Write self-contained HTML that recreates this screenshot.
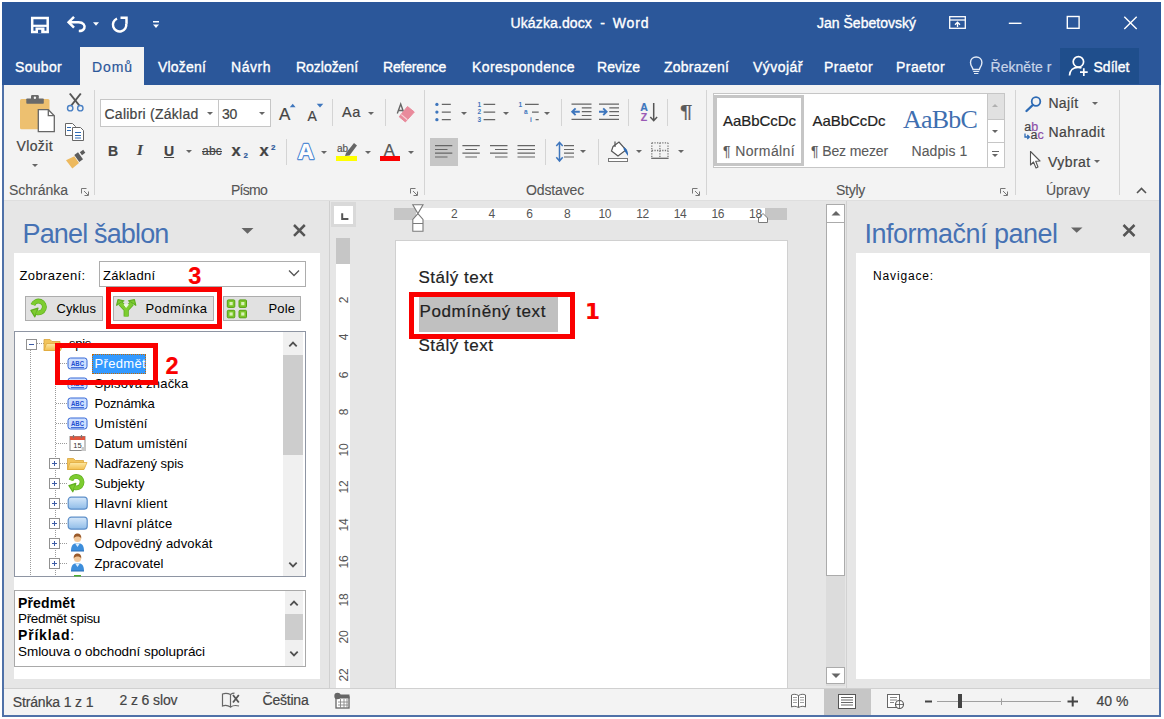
<!DOCTYPE html>
<html><head><meta charset="utf-8"><title>Ukázka.docx - Word</title>
<style>
html,body{margin:0;padding:0;background:#fff;}
body{width:1164px;height:719px;position:relative;overflow:hidden;font-family:"Liberation Sans",sans-serif;}
.a{position:absolute;}
.t{position:absolute;white-space:nowrap;font-family:"Liberation Sans",sans-serif;color:#444;-webkit-text-stroke:0.2px currentColor;}
.w{color:#fff;-webkit-text-stroke:0.35px #fff;}
.tah{color:#000;-webkit-text-stroke:0;}
.serif{font-family:"Liberation Serif",serif;}
.dj{font-family:"DejaVu Sans",sans-serif;}
svg{position:absolute;overflow:visible;}
.vsep{position:absolute;width:1px;background:#d4d4d4;}
.arr{position:absolute;width:0;height:0;border-left:3px solid transparent;border-right:3px solid transparent;border-top:3px solid #666;}
.btn{background:#e1e1e1;border:1px solid #adadad;box-sizing:border-box;}
.red{border:5px solid #fa0000;box-sizing:border-box;}
.exp{width:9px;height:9px;border:1px solid #919191;background:#fff;box-sizing:content-box;}
.exp i{position:absolute;left:2px;top:4px;width:5px;height:1px;background:#3c5ba5;}
.exp b{position:absolute;left:4px;top:2px;width:1px;height:5px;background:#3c5ba5;}
.rn{-webkit-text-stroke:0;color:#555;width:30px;height:12px;line-height:12px;font-size:12px;text-align:center;letter-spacing:-0.3px;}
</style></head><body>
<!-- window frame -->
<div class="a" id="win" style="left:2px;top:2px;width:1159px;height:714.5px;background:#4f71a8;"></div>
<div class="a" style="left:2px;top:2px;width:1159px;height:83px;background:#2b579a;"></div>
<div class="a" id="ribbon" style="left:4px;top:85px;width:1155px;height:115px;background:#f3f3f3;"></div>
<div class="a" id="ribbonline" style="left:4px;top:200px;width:1155px;height:1px;background:#dedede;"></div>
<div class="a" id="work" style="left:4px;top:201px;width:1155px;height:487px;background:#e6e6e6;"></div>
<div class="a" id="status" style="left:4px;top:688px;width:1155px;height:26.5px;background:#f3f3f3;border-top:1px solid #d0d0d0;box-sizing:border-box;"></div>

<!-- TITLEBAR -->
<div id="titlebar">
<div class="a" style="left:1060px;top:47.5px;width:79px;height:36px;background:#1f4e8c;"></div>
<div class="a" style="left:80px;top:47px;width:64px;height:39px;background:#f3f3f3;"></div>

<svg style="left:0;top:0" width="1164" height="90" viewBox="0 0 1164 90">
<!-- save -->
<path d="M32.200 18 H47.700 V32 H32.200 Z" fill="none" stroke="#fff" stroke-width="2.500"></path>
<path d="M32 25.800 H48" stroke="#fff" stroke-width="2.200"></path>
<rect x="35.500" y="27.500" width="9" height="5" fill="#fff"></rect><rect x="38" y="29.800" width="3.200" height="3.400" fill="#2b579a"></rect>
<!-- undo -->
<path d="M69 22.200 H78.500 C83.500 22.200 85.300 25.500 84.300 28.200 C83.500 30.300 81.500 31 78.800 31" fill="none" stroke="#fff" stroke-width="2.500"></path>
<path d="M74 16.800 L68.600 22.200 L74 27.600" fill="none" stroke="#fff" stroke-width="2.500"></path>
<path d="M93 22.300 H99 L96 25.800 Z" fill="#fff"></path>
<!-- redo -->
<path d="M117 18.600 A6.700 6.700 0 1 0 126.200 23.500" fill="none" stroke="#fff" stroke-width="2.500"></path>
<path d="M120.500 17.700 H126.500 V23.700" fill="none" stroke="#fff" stroke-width="2.500"></path>
<!-- customize -->
<rect x="153" y="21" width="6" height="1.500" fill="#fff"></rect>
<path d="M153 24.500 H159 L156 28 Z" fill="#fff"></path>
<!-- ribbon display options -->
<rect x="949.700" y="16.700" width="15.600" height="11.600" fill="none" stroke="#fff" stroke-width="1.300"></rect>
<path d="M949.700 20 H965.300" stroke="#fff" stroke-width="1.300"></path>
<path d="M957.500 27 V22.300 M955 24.700 L957.500 22.200 L960 24.700" fill="none" stroke="#fff" stroke-width="1.300"></path>
<!-- min max close -->
<path d="M1008.800 23.300 H1021.500" stroke="#fff" stroke-width="1.400"></path>
<rect x="1067.300" y="16.500" width="11.800" height="11.800" fill="none" stroke="#fff" stroke-width="1.400"></rect>
<path d="M1124.300 16.700 L1136.700 29 M1136.700 16.700 L1124.300 29" stroke="#fff" stroke-width="1.400"></path>
<!-- bulb -->
<path d="M973 69.500 C972.800 67.500 970.500 66.200 970.500 62.500 C970.500 59.300 973 57 976.200 57 C979.400 57 981.900 59.300 981.900 62.500 C981.900 66.200 979.600 67.500 979.400 69.500 Z" fill="none" stroke="#e4ebf6" stroke-width="1.400"></path>
<path d="M973.200 71.500 H979.200 M974 73.500 H978.400" stroke="#e4ebf6" stroke-width="1.200"></path>
<!-- share person -->
<circle cx="1078.400" cy="61.800" r="5.200" fill="none" stroke="#fff" stroke-width="1.700"></circle>
<path d="M1069.500 75.500 C1069.800 70 1073.500 67.300 1078 67.300 C1079.500 67.300 1080.500 67.500 1081.500 68" fill="none" stroke="#fff" stroke-width="1.700"></path>
<path d="M1083.800 68.300 V76 M1080 72.200 H1087.700" stroke="#fff" stroke-width="1.700"></path>
</svg>
<span class="t w" style="left: 510.5px; font-size: 14px; line-height: 14px; top: 15.95px; letter-spacing: 0.122px;">Ukázka.docx</span>
<span class="t w" style="left: 600.3px; font-size: 14px; line-height: 14px; top: 15.95px;">-</span>
<span class="t w" style="left: 612.8px; font-size: 14px; line-height: 14px; top: 15.95px; letter-spacing: 0.824px;">Word</span>
<span class="t w" style="left: 817px; font-size: 14px; line-height: 14px; top: 15.95px; letter-spacing: 0.011px;">Jan Šebetovský</span>
</div>

<!-- TABS -->
<div id="tabs">
<span class="t w" style="left: 15px; font-size: 14px; line-height: 14px; top: 60.15px; letter-spacing: 0.307px;">Soubor</span>
<span class="t" style="color: rgb(43, 87, 154); left: 92px; font-size: 14px; line-height: 14px; top: 60.15px; letter-spacing: 0.91px;">Domů</span>
<span class="t w" style="left: 158px; font-size: 14px; line-height: 14px; top: 60.15px; letter-spacing: 0.185px;">Vložení</span>
<span class="t w" style="left: 231px; font-size: 14px; line-height: 14px; top: 60.15px; letter-spacing: 0.528px;">Návrh</span>
<span class="t w" style="left: 296px; font-size: 14px; line-height: 14px; top: 60.15px; letter-spacing: -0.03px;">Rozložení</span>
<span class="t w" style="left: 383px; font-size: 14px; line-height: 14px; top: 60.15px; letter-spacing: -0.177px;">Reference</span>
<span class="t w" style="left: 472px; font-size: 14px; line-height: 14px; top: 60.15px; letter-spacing: 0.379px;">Korespondence</span>
<span class="t w" style="left: 597px; font-size: 14px; line-height: 14px; top: 60.15px; letter-spacing: 0.034px;">Revize</span>
<span class="t w" style="left: 664px; font-size: 14px; line-height: 14px; top: 60.15px; letter-spacing: 0.217px;">Zobrazení</span>
<span class="t w" style="left: 753px; font-size: 14px; line-height: 14px; top: 60.15px; letter-spacing: 0.473px;">Vývojář</span>
<span class="t w" style="left: 824px; font-size: 14px; line-height: 14px; top: 60.15px; letter-spacing: 0.44px;">Praetor</span>
<span class="t w" style="left: 896px; font-size: 14px; line-height: 14px; top: 60.15px; letter-spacing: 0.44px;">Praetor</span>
<span class="t" style="color: rgb(200, 212, 232); left: 990.5px; font-size: 14px; line-height: 14px; top: 60.15px; letter-spacing: 0.033px;">Řekněte r</span>
<span class="t w" style="left: 1093.5px; font-size: 14px; line-height: 14px; top: 60.15px; letter-spacing: 0.031px;">Sdílet</span>
</div>

<!-- RIBBON -->
<div id="rib">

<!-- group separators -->
<div class="vsep" style="left:94px;top:90px;height:105px;"></div>
<div class="vsep" style="left:424px;top:90px;height:105px;"></div>
<div class="vsep" style="left:706px;top:90px;height:105px;"></div>
<div class="vsep" style="left:1015px;top:90px;height:105px;"></div>
<div class="vsep" style="left:1119px;top:90px;height:105px;"></div>
<!-- small separators -->
<div class="vsep" style="left:332px;top:99px;height:27px;"></div>
<div class="vsep" style="left:385px;top:99px;height:27px;"></div>
<div class="vsep" style="left:286px;top:139px;height:26px;"></div>
<div class="vsep" style="left:561px;top:99px;height:27px;"></div>
<div class="vsep" style="left:628px;top:99px;height:27px;"></div>
<div class="vsep" style="left:667px;top:99px;height:27px;"></div>
<div class="vsep" style="left:545px;top:139px;height:26px;"></div>
<div class="vsep" style="left:598px;top:139px;height:26px;"></div>
<!-- group labels -->
<span class="t" style="color: rgb(85, 85, 85); -webkit-text-stroke: 0.1px; left: 9px; font-size: 14px; line-height: 14px; top: 182.65px; letter-spacing: -0.02px;">Schránka</span>
<span class="t" style="color: rgb(85, 85, 85); -webkit-text-stroke: 0.1px; left: 231px; font-size: 14px; line-height: 14px; top: 182.65px; letter-spacing: -0.737px;">Písmo</span>
<span class="t" style="color: rgb(85, 85, 85); -webkit-text-stroke: 0.1px; left: 526px; font-size: 14px; line-height: 14px; top: 182.65px; letter-spacing: -0.143px;">Odstavec</span>
<span class="t" style="color: rgb(85, 85, 85); -webkit-text-stroke: 0.1px; left: 836px; font-size: 14px; line-height: 14px; top: 182.65px; letter-spacing: -0.269px;">Styly</span>
<span class="t" style="color: rgb(85, 85, 85); -webkit-text-stroke: 0.1px; left: 1046px; font-size: 14px; line-height: 14px; top: 182.65px; letter-spacing: -0.06px;">Úpravy</span>
<!-- clipboard -->
<span class="t" style="left: 16.5px; font-size: 14px; line-height: 14px; top: 139.15px; letter-spacing: 0.378px;">Vložit</span>
<div class="arr" style="left:32px;top:164px;"></div>
<!-- font boxes -->
<div class="a" style="left:100px;top:99px;width:171px;height:28px;background:#fff;border:1px solid #c6c6c6;box-sizing:border-box;"></div>
<div class="a" style="left:218px;top:99px;width:1px;height:28px;background:#c6c6c6;"></div>
<span class="t" style="left: 104.5px; font-size: 14px; line-height: 14px; top: 106.65px; letter-spacing: 0.25px;">Calibri (Základ</span>
<div class="arr" style="left:207px;top:112px;"></div>
<span class="t" style="left: 222px; font-size: 14px; line-height: 14px; top: 106.65px; letter-spacing: -0.289px;">30</span>
<div class="arr" style="left:259px;top:112px;"></div>
<span class="t" style="left: 279px; font-size: 17px; line-height: 17px; top: 106.11px;">A</span>
<span class="t" style="left: 307.5px; font-size: 14px; line-height: 14px; top: 108.65px;">A</span>
<span class="t" style="left: 342px; font-size: 14.5px; line-height: 14.5px; top: 104.73px; letter-spacing: 0.625px;">Aa</span>
<div class="arr" style="left:368px;top:112px;"></div>
<!-- row 2 font -->
<span class="t" style="font-weight: bold; left: 108px; font-size: 14px; line-height: 14px; top: 144.15px;">B</span>
<span class="t serif" style="font-style: italic; font-weight: bold; left: 137px; font-size: 15px; line-height: 15px; top: 143.44px;">I</span>
<span class="t" style="font-weight: bold; text-decoration: underline; left: 164px; font-size: 14px; line-height: 14px; top: 144.15px;">U</span>
<div class="arr" style="left:186px;top:150px;"></div>
<span class="t" style="text-decoration: line-through; left: 202px; font-size: 12px; line-height: 12px; top: 145.34px; letter-spacing: 0.214px;">abc</span>
<span class="t" style="font-weight: bold; left: 231.5px; font-size: 16.5px; line-height: 16.5px; top: 142.03px;">x</span>
<span class="t" style="font-weight: bold; color: rgb(43, 87, 154); left: 243.5px; font-size: 8px; line-height: 8px; top: 152.23px;">2</span>
<span class="t" style="font-weight: bold; left: 259.5px; font-size: 16.5px; line-height: 16.5px; top: 142.03px;">x</span>
<span class="t" style="font-weight: bold; color: rgb(43, 87, 154); left: 271px; font-size: 8px; line-height: 8px; top: 143.73px;">2</span>
<div class="arr" style="left:321px;top:150.500px;"></div>
<div class="arr" style="left:364.700px;top:150.500px;"></div>
<div class="arr" style="left:407.500px;top:150.500px;"></div>
<span class="t" style="color: rgb(85, 85, 85); left: 383.8px; font-size: 16.5px; line-height: 16.5px; top: 142.03px;">A</span>
<div class="a" style="left:380px;top:156px;width:20px;height:5px;background:#fa0000;"></div>
<span class="t" style="color: rgb(85, 85, 85); left: 337px; font-size: 10px; line-height: 10px; top: 143.54px; letter-spacing: -0.062px;">ab</span>
<div class="a" style="left:336px;top:156px;width:21px;height:5px;background:#ffff00;"></div>
<!-- paragraph row1 arrows -->
<div class="arr" style="left:461px;top:112px;"></div>
<div class="arr" style="left:503px;top:112px;"></div>
<div class="arr" style="left:544px;top:112px;"></div>
<div class="arr" style="left:580px;top:150px;"></div>
<div class="arr" style="left:636px;top:150px;"></div>
<div class="arr" style="left:678px;top:150px;"></div>
<div class="a" style="left:430px;top:138px;width:28px;height:28px;background:#c6c6c6;"></div>
<span class="t" style="color: rgb(90, 90, 90); transform: scaleX(1.3); transform-origin: 0px 0px; left: 680px; font-size: 18px; line-height: 18px; top: 102.96px;">¶</span>
<!-- styles gallery -->
<div class="a" style="left:713px;top:93px;width:292px;height:75px;background:#fff;border:1px solid #c6c6c6;box-sizing:border-box;"></div>
<div class="a" style="left:714px;top:95px;width:90px;height:71px;border:3px solid #c6c6c6;box-sizing:border-box;"></div>
<span class="t" style="color: rgb(34, 34, 34); left: 723px; font-size: 15px; line-height: 15px; top: 113.3px; letter-spacing: -0.045px;">AaBbCcDc</span>
<span class="t" style="color: rgb(90, 90, 90); -webkit-text-stroke: 0.1px; left: 723px; font-size: 14px; line-height: 14px; top: 144.15px; letter-spacing: 0.38px;">¶ Normální</span>
<span class="t" style="color: rgb(34, 34, 34); left: 812.5px; font-size: 15px; line-height: 15px; top: 113.3px; letter-spacing: -0.045px;">AaBbCcDc</span>
<span class="t" style="color: rgb(90, 90, 90); -webkit-text-stroke: 0.1px; left: 811px; font-size: 14px; line-height: 14px; top: 144.15px; letter-spacing: -0.121px;">¶ Bez mezer</span>
<span class="t serif" style="color: rgb(63, 111, 176); -webkit-text-stroke: 0px; left: 903px; font-size: 26px; line-height: 26px; top: 106.73px; letter-spacing: -0.8px;">AaBbC</span>
<span class="t" style="color: rgb(90, 90, 90); -webkit-text-stroke: 0.1px; left: 911.5px; font-size: 14px; line-height: 14px; top: 144.15px; letter-spacing: 0.092px;">Nadpis 1</span>
<div class="a" style="left:987px;top:94px;width:17px;height:25px;background:#e1e1e1;border-left:1px solid #c6c6c6;box-sizing:border-box;"></div>
<div class="a" style="left:987px;top:119px;width:17px;height:24px;border:1px solid #c6c6c6;border-right:none;box-sizing:border-box;"></div>
<div class="a" style="left:987px;top:143px;width:17px;height:24px;border-left:1px solid #c6c6c6;box-sizing:border-box;"></div>
<div class="arr" style="left:992px;top:104px;border-top:none;border-bottom:3px solid #b0b0b0;"></div>
<div class="arr" style="left:992px;top:130px;"></div>
<div class="a" style="left:992px;top:151px;width:7px;height:1px;background:#666;"></div>
<div class="arr" style="left:992px;top:154px;"></div>
<!-- editing -->
<span class="t" style="left: 1048.5px; font-size: 14px; line-height: 14px; top: 96.15px; letter-spacing: 0.241px;">Najít</span>
<div class="arr" style="left:1092px;top:102px;"></div>
<span class="t" style="left: 1048.5px; font-size: 14px; line-height: 14px; top: 125.15px; letter-spacing: 0.447px;">Nahradit</span>
<span class="t" style="left: 1048px; font-size: 14px; line-height: 14px; top: 154.65px; letter-spacing: 0.424px;">Vybrat</span>
<div class="arr" style="left:1094px;top:160px;"></div>
<span class="t" style="color: rgb(68, 68, 68); left: 1024.3px; font-size: 12.5px; line-height: 12.5px; top: 121.22px;">a<span style="color:#8d4fa8">b</span></span>
<span class="t" style="color: rgb(68, 68, 68); left: 1030.5px; font-size: 12.5px; line-height: 12.5px; top: 129.22px;">a<span style="color:#8d4fa8">c</span></span>

<svg id="ribsvg" style="left:0;top:0" width="1164" height="719" viewBox="0 0 1164 719">
<!-- paste -->
<rect x="20" y="99" width="29.500" height="30.300" rx="1.500" fill="#edc070"></rect>
<rect x="26.300" y="98.400" width="17.500" height="5.400" rx="0.800" fill="#6a6a6a"></rect>
<rect x="31" y="95" width="7.800" height="4.500" rx="1.200" fill="#6a6a6a"></rect>
<circle cx="34.900" cy="97.700" r="1.200" fill="#f3f3f3"></circle>
<path d="M38.300 109.700 H48.300 L54.300 115.700 V131.700 H38.300 Z" fill="#fff" stroke="#666" stroke-width="1.300"></path>
<path d="M48.300 109.700 V115.700 H54.300" fill="none" stroke="#666" stroke-width="1.300"></path>
<!-- scissors -->
<g stroke="#555" stroke-width="2" fill="none"><path d="M69.800 93.500 L79.300 105.500"></path><path d="M80.800 93.500 L71.300 105.500"></path></g>
<circle cx="70.200" cy="108.200" r="2.700" fill="none" stroke="#4a80c4" stroke-width="1.400"></circle>
<circle cx="80.300" cy="108.200" r="2.700" fill="none" stroke="#4a80c4" stroke-width="1.400"></circle>
<!-- copy -->
<g fill="#fff" stroke="#666" stroke-width="1"><path d="M65.500 123.500 H72.500 L75.500 126.500 V135.500 H65.500 Z"></path><path d="M72.500 127.500 H80.500 L83.500 130.500 V140.500 H72.500 Z"></path></g>
<g stroke="#2e6bb5" stroke-width="1"><path d="M67 127.500 H71 M67 130.500 H71 M75 132.500 H81 M75 135.500 H81 M75 138 H81"></path></g>
<!-- format painter -->
<path d="M66 160.300 L74.300 156.300 L79 163 L72.300 168.500 Z" fill="#edb95e"></path>
<path d="M74.300 155 L78 152.300 L83 159.300 L79.300 162 Z" fill="#5c5c5c"></path>
<path d="M79.800 152.300 L83.200 149.800 L85.300 152.800 L82 155.300 Z" fill="#5c5c5c"></path>
<!-- launchers -->
<defs><g id="lnch" fill="none" stroke="#777" stroke-width="1"><path d="M0.500 5.500 V0.500 H5.500"></path><path d="M3 3 L7 7 M7.500 3.500 V7.500 H3.500"></path></g></defs>
<!-- grow/shrink font triangles -->
<path d="M289.800 107.300 L292.700 103.800 L295.600 107.300 Z" fill="#3e76bd"></path>
<path d="M316.700 103.700 L323.300 103.700 L320 107.400 Z" fill="#3e76bd"></path>
<!-- clear formatting -->
<path d="M397.300 113.600 L400.700 104 L404.100 113.600 M398.500 110.500 H403" fill="none" stroke="#666" stroke-width="1.400"></path>
<path d="M407.500 106.500 L414.300 112 L405.400 121.900 L399.200 116.800 Z" fill="#e98a9b" stroke="#e98a9b" stroke-width="1" stroke-linejoin="round"></path>
<path d="M401.300 114.600 L407.300 119.700" stroke="#f7d0d6" stroke-width="1.200"></path>
<!-- text effects A -->
<text x="297.800" y="158.600" font-family="Liberation Sans, sans-serif" font-size="22.500" font-weight="bold" fill="#fdfdfd" stroke="#4a86d3" stroke-width="2.600" stroke-linejoin="round" paint-order="stroke" opacity="0.95">A</text>
<text x="297.800" y="158.600" font-family="Liberation Sans, sans-serif" font-size="22.500" font-weight="bold" fill="#fdfdfd">A</text>
<!-- highlighter pen -->
<path d="M346 153 L354 143 L357 145.500 L349.500 155.500 L345 156 Z" fill="#666"></path>
<!-- bullets -->
<g fill="#3e76bd"><circle cx="436.900" cy="104.400" r="1.650"></circle><circle cx="436.900" cy="112.100" r="1.650"></circle><circle cx="436.900" cy="119.700" r="1.650"></circle></g>
<g stroke="#666" stroke-width="1.300"><path d="M441.800 104.400 H450.800 M441.800 112.100 H450.800 M441.800 119.700 H450.800"></path></g>
<!-- numbering -->
<text x="479.200" y="106.700" font-family="Liberation Sans, sans-serif" font-size="6.500" font-weight="bold" fill="#3e76bd" text-anchor="middle">1</text><text x="479.200" y="114.400" font-family="Liberation Sans, sans-serif" font-size="6.500" font-weight="bold" fill="#3e76bd" text-anchor="middle">2</text><text x="479.200" y="122" font-family="Liberation Sans, sans-serif" font-size="6.500" font-weight="bold" fill="#3e76bd" text-anchor="middle">3</text>
<g stroke="#666" stroke-width="1.300"><path d="M483.600 104.400 H495.200 M483.600 112.100 H495.200 M483.600 119.700 H495.200"></path></g>
<!-- multilevel -->
<text x="520.400" y="106.700" font-family="Liberation Sans, sans-serif" font-size="6.500" font-weight="bold" fill="#3e76bd" text-anchor="middle">1</text><text x="525.700" y="114.200" font-family="Liberation Sans, sans-serif" font-size="6.500" font-weight="bold" fill="#3e76bd" text-anchor="middle">a</text><text x="531" y="122" font-family="Liberation Sans, sans-serif" font-size="6.500" font-weight="bold" fill="#3e76bd" text-anchor="middle">i</text>
<g stroke="#666" stroke-width="1.300"><path d="M525 104.400 H538.700 M532 112.100 H538.700 M535.600 119.700 H538.700"></path></g>
<!-- outdent -->
<g stroke="#666" stroke-width="1.200"><path d="M571.500 104.200 H591.500 M581.800 107.900 H591.500 M581.800 111.700 H591.500 M581.800 115.500 H591.500 M571.500 119.300 H591.500"></path></g>
<path d="M572.500 111.700 H579.800 M575.600 108.300 L572.200 111.700 L575.600 115.100" fill="none" stroke="#3e76bd" stroke-width="1.900"></path>
<!-- indent -->
<g stroke="#666" stroke-width="1.200"><path d="M599 104.200 H619 M609.300 107.900 H619 M609.300 111.700 H619 M609.300 115.500 H619 M599 119.300 H619"></path></g>
<path d="M599 111.700 H606.500 M603.200 108.300 L606.600 111.700 L603.200 115.100" fill="none" stroke="#3e76bd" stroke-width="1.900"></path>
<!-- sort -->
<path d="M653.700 103 V120.500 M650.300 117 L653.700 120.700 L657.100 117" fill="none" stroke="#555" stroke-width="1.500"></path>
<!-- align icons -->
<g stroke="#666" stroke-width="1.2">
<path d="M435 145.700 H452.300 M435 149.500 H447.500 M435 153.200 H452.300 M435 157 H447.500"></path>
<path d="M462.400 145.700 H479.800 M465.300 149.500 H477 M462.400 153.200 H479.800 M465.300 157 H477"></path>
<path d="M490 145.700 H507.500 M495 149.500 H507.500 M490 153.200 H507.500 M495 157 H507.500"></path>
<path d="M517.500 145.700 H535 M517.500 149.500 H535 M517.500 153.200 H535 M517.500 157 H535"></path>
</g>
<!-- line spacing -->
<g stroke="#666" stroke-width="1.200"><path d="M564 145.700 H574 M564 149.500 H574 M564 153.200 H574 M564 157 H574"></path></g>
<path d="M559.500 142.500 V160.500 M556.300 146 L559.500 142.300 L562.700 146 M556.300 157.300 L559.500 161 L562.700 157.300" fill="none" stroke="#3e76bd" stroke-width="1.500"></path>
<!-- shading bucket -->
<path d="M613 146.500 L619 142 L626 150 L618 156 L611.500 151 Z" fill="#fff" stroke="#555" stroke-width="1.2"></path>
<path d="M615 141.500 V147" stroke="#555" stroke-width="1.2"></path>
<path d="M624 147 C627 149 628.500 152 628 156 C626 153 624.500 151 623.500 149 Z" fill="#2e6bb5"></path>
<rect x="608.500" y="158.500" width="19" height="3" fill="#fff" stroke="#777" stroke-width="1"></rect>
<!-- borders -->
<g stroke="#7a7a7a" stroke-width="1.300" stroke-dasharray="1.300 1.300" fill="none"><path d="M651.800 142.800 H668 M651.800 142.800 V158 M668 142.800 V158 M659.900 142.800 V158 M651.800 150.500 H668"></path></g>
<path d="M651.200 158.300 H668.600" stroke="#666" stroke-width="1.300"></path>
<!-- magnifier -->
<circle cx="1036" cy="101.500" r="4.300" fill="none" stroke="#2e6bb5" stroke-width="1.8"></circle>
<path d="M1032.800 105 L1026.500 111" stroke="#2e6bb5" stroke-width="2.4" stroke-linecap="round"></path>
<!-- replace arrow -->
<path d="M1025 133.500 V137 H1029 M1027.300 135 L1029.300 137 L1027.300 139" fill="none" stroke="#2e6bb5" stroke-width="1.3"></path>
<!-- select cursor -->
<path d="M1030.500 151.500 V165 L1033.500 162 L1036 168 L1038 167 L1035.700 161.300 L1040 161 Z" fill="#fff" stroke="#555" stroke-width="1.1" stroke-linejoin="round"></path>
<!-- collapse chevron -->
<path d="M1137 193 L1141.500 188.500 L1146 193" fill="none" stroke="#555" stroke-width="1.6"></path>
</svg>
<svg style="left:81px;top:187.500px" width="9" height="9"><use href="#lnch"></use></svg>
<svg style="left:410px;top:187.500px" width="9" height="9"><use href="#lnch"></use></svg>
<svg style="left:692px;top:187.500px" width="9" height="9"><use href="#lnch"></use></svg>
<svg style="left:1000px;top:187.500px" width="9" height="9"><use href="#lnch"></use></svg>
<span class="t" style="color: rgb(62, 118, 189); font-weight: bold; left: 640.3px; font-size: 10.5px; line-height: 10.5px; top: 101.91px;">A</span>
<span class="t" style="color: rgb(154, 89, 181); font-weight: bold; left: 640.8px; font-size: 10.5px; line-height: 10.5px; top: 112.11px;">Z</span>
</div>

<!-- LEFT PANEL -->
<div id="left">

<div class="a" style="left:14px;top:253px;width:306px;height:426px;background:#fff;"></div>
<span class="t" style="color: rgb(70, 114, 180); -webkit-text-stroke: 0px; left: 22.5px; font-size: 27px; line-height: 27px; top: 221.14px; letter-spacing: -0.844px;">Panel šablon</span>
<svg style="left:0;top:200px" width="330" height="60" viewBox="0 200 330 60">
<path d="M241.500 228 H253.500 L247.500 233.800 Z" fill="#666"></path>
<path d="M294 225 L304.800 235.800 M304.800 225 L294 235.800" stroke="#555" stroke-width="2.500"></path>
</svg>
<span class="t tah" style="left: 19.5px; font-size: 13px; line-height: 13px; top: 268.8px; letter-spacing: 0.384px;">Zobrazení:</span>
<div class="a" style="left:99px;top:261px;width:206.500px;height:25.500px;background:#fff;border:1px solid #adadad;box-sizing:border-box;"></div>
<span class="t tah" style="left: 103px; font-size: 13px; line-height: 13px; top: 268.8px; letter-spacing: 0.328px;">Základní</span>
<svg style="left:288px;top:269px" width="12" height="8"><path d="M1 1.500 L6 6.500 L11 1.500" fill="none" stroke="#555" stroke-width="1.300"></path></svg>
<!-- buttons -->
<div class="a btn" style="left:25px;top:295.800px;width:77.500px;height:25.500px;"></div>
<div class="a btn" style="left:113.300px;top:295.800px;width:100.500px;height:25.500px;"></div>
<div class="a btn" style="left:223px;top:295.800px;width:77.500px;height:25.500px;"></div>
<span class="t tah" style="left: 56.5px; font-size: 13px; line-height: 13px; top: 302.3px; letter-spacing: 0.081px;">Cyklus</span>
<span class="t tah" style="left: 145.5px; font-size: 13px; line-height: 13px; top: 302.3px; letter-spacing: 0.432px;">Podmínka</span>
<span class="t tah" style="left: 268.5px; font-size: 13px; line-height: 13px; top: 302.3px; letter-spacing: 0.117px;">Pole</span>
<!-- tree box -->
<div class="a" style="left:14px;top:331px;width:292px;height:246px;background:#fff;border:1px solid #8e95a3;box-sizing:border-box;"></div>
<div class="a" style="left:283px;top:332px;width:20px;height:244px;background:#f0f0f0;"></div>
<div class="a" style="left:283px;top:355px;width:20px;height:100px;background:#cdcdcd;"></div>
<svg style="left:287px;top:340px" width="12" height="8"><path d="M2.300 6.300 L6 2.600 L9.700 6.300" fill="none" stroke="#505050" stroke-width="1.800"></path></svg>
<svg style="left:287px;top:561px" width="12" height="8"><path d="M2.300 1.700 L6 5.400 L9.700 1.700" fill="none" stroke="#505050" stroke-width="1.800"></path></svg>
<!-- tree lines -->
<div class="a" style="left:30px;top:349px;width:0;height:226px;border-left:1px dotted #9a9a9a;"></div>
<div class="a" style="left:55px;top:352px;width:0;height:223px;border-left:1px dotted #9a9a9a;"></div>
<div class="a" style="left:36px;top:343px;width:8px;height:0;border-top:1px dotted #9a9a9a;"></div>
<span class="t tah" style="left: 69px; font-size: 13px; line-height: 13px; top: 336.5px; letter-spacing: -0.281px;">spis</span>
<div class="a" style="left:92px;top:354px;width:54px;height:20px;background:#3399ff;outline:1px dotted #c66a00;outline-offset:-1px;"></div>
<span class="t tah" style="color: rgb(255, 255, 255); left: 94.5px; font-size: 13px; line-height: 13px; top: 356.6px; letter-spacing: 0.337px;">Předmět</span>
<div class="a" style="left:56px;top:363px;width:11px;height:0;border-top:1px dotted #9a9a9a;"></div>
<span class="t tah" style="left: 94.5px; font-size: 13px; line-height: 13px; top: 376.6px; letter-spacing: 0.21px;">Spisová značka</span>
<div class="a" style="left:56px;top:383px;width:11px;height:0;border-top:1px dotted #9a9a9a;"></div>
<span class="t tah" style="left: 94.5px; font-size: 13px; line-height: 13px; top: 396.6px; letter-spacing: -0.178px;">Poznámka</span>
<div class="a" style="left:56px;top:403px;width:11px;height:0;border-top:1px dotted #9a9a9a;"></div>
<span class="t tah" style="left: 94.5px; font-size: 13px; line-height: 13px; top: 416.6px; letter-spacing: 0.123px;">Umístění</span>
<div class="a" style="left:56px;top:423px;width:11px;height:0;border-top:1px dotted #9a9a9a;"></div>
<span class="t tah" style="left: 94.5px; font-size: 13px; line-height: 13px; top: 436.6px; letter-spacing: 0.088px;">Datum umístění</span>
<div class="a" style="left:56px;top:443px;width:11px;height:0;border-top:1px dotted #9a9a9a;"></div>
<span class="t tah" style="left: 94.5px; font-size: 13px; line-height: 13px; top: 456.6px; letter-spacing: -0.044px;">Nadřazený spis</span>
<div class="a" style="left:59px;top:463px;width:8px;height:0;border-top:1px dotted #9a9a9a;"></div>
<div class="a exp" style="left:49px;top:458px;"><i></i><b></b></div>
<span class="t tah" style="left: 94.5px; font-size: 13px; line-height: 13px; top: 476.6px; letter-spacing: 0.016px;">Subjekty</span>
<div class="a" style="left:59px;top:483px;width:8px;height:0;border-top:1px dotted #9a9a9a;"></div>
<div class="a exp" style="left:49px;top:478px;"><i></i><b></b></div>
<span class="t tah" style="left: 94.5px; font-size: 13px; line-height: 13px; top: 496.6px; letter-spacing: 0.168px;">Hlavní klient</span>
<div class="a" style="left:59px;top:503px;width:8px;height:0;border-top:1px dotted #9a9a9a;"></div>
<div class="a exp" style="left:49px;top:498px;"><i></i><b></b></div>
<span class="t tah" style="left: 94.5px; font-size: 13px; line-height: 13px; top: 516.6px; letter-spacing: 0.219px;">Hlavní plátce</span>
<div class="a" style="left:59px;top:523px;width:8px;height:0;border-top:1px dotted #9a9a9a;"></div>
<div class="a exp" style="left:49px;top:518px;"><i></i><b></b></div>
<span class="t tah" style="left: 94.5px; font-size: 13px; line-height: 13px; top: 536.6px; letter-spacing: 0.139px;">Odpovědný advokát</span>
<div class="a" style="left:59px;top:543px;width:8px;height:0;border-top:1px dotted #9a9a9a;"></div>
<div class="a exp" style="left:49px;top:538px;"><i></i><b></b></div>
<span class="t tah" style="left: 94.5px; font-size: 13px; line-height: 13px; top: 556.6px; letter-spacing: 0.098px;">Zpracovatel</span>
<div class="a" style="left:59px;top:563px;width:8px;height:0;border-top:1px dotted #9a9a9a;"></div>
<div class="a exp" style="left:49px;top:558px;"><i></i><b></b></div>
<div class="a exp" style="left:26px;top:339px;"><i></i></div>
<svg style="left:0;top:330px" width="330" height="250" viewBox="0 330 330 250">
<defs>
<linearGradient id="gblue" x1="0" y1="0" x2="0" y2="1"><stop offset="0" stop-color="#d6e8fa"></stop><stop offset="1" stop-color="#8fbce8"></stop></linearGradient>
<linearGradient id="gfold" x1="0" y1="0" x2="0" y2="1"><stop offset="0" stop-color="#fde9a6"></stop><stop offset="1" stop-color="#f3bf4e"></stop></linearGradient>
<g id="iabc"><rect x="0.500" y="0.500" width="19" height="11" rx="2.500" fill="#cfe0ff" stroke="#3768d6" stroke-width="1"></rect><text x="10" y="8.600" font-family="Liberation Sans, sans-serif" font-size="7" font-weight="bold" fill="#1f4fd0" text-anchor="middle" textLength="13" lengthAdjust="spacingAndGlyphs">ABC</text><path d="M3.500 10 H16.500" stroke="#1f4fd0" stroke-width="0.800"></path></g>
<g id="ifold"><path d="M1 3 H7 L9 5 H17 V14 H1 Z" fill="#f2c45c" stroke="#d9a43a" stroke-width="0.800"></path><path d="M3.500 7 H20.500 L17.500 14 H1 Z" fill="url(#gfold)" stroke="#e0a93c" stroke-width="0.800"></path></g>
<g id="irect"><rect x="0.700" y="0.700" width="19" height="12" rx="3" fill="url(#gblue)" stroke="#5d8fc9" stroke-width="1.200"></rect></g>
<g id="icyc"><path d="M3.24 6.05 A5.7 5.7 0 1 1 6.65 13.36" fill="none" stroke="#5fae20" stroke-width="4.8"></path><path d="M8.19 9.13 L5.11 17.58 L1.24 11.39 Z" fill="#7dcc30" stroke="#5fae20" stroke-width="1.2" stroke-linejoin="round"></path><path d="M3.24 6.05 A5.7 5.7 0 1 1 6.65 13.36" fill="none" stroke="#7dcc30" stroke-width="3.6"></path></g>
<g id="ipers"><circle cx="7" cy="5" r="3.600" fill="#f1c79a"></circle><path d="M3.200 5 C3 1 5 0 7 0 C9.500 0 11 1.500 10.800 5 C10 3.500 8.500 3 7 3 C5.500 3 4 3.500 3.200 5 Z" fill="#9a5a2a"></path><path d="M0.500 17.500 C0.500 11.500 3 9.500 7 9.500 C11 9.500 13.500 11.500 13.500 17.500 Z" fill="#3d8edb"></path><path d="M4.500 9.800 L7 13.500 L9.500 9.800 Z" fill="#dbeeff"></path><path d="M0.500 17.500 H13.500" stroke="#2a6cb5" stroke-width="1"></path></g>
<g id="ical"><rect x="0.500" y="1.500" width="15" height="14" fill="#fff" stroke="#8a8a8a" stroke-width="1"></rect><rect x="0.500" y="1.500" width="15" height="3.500" fill="#e2553d"></rect><path d="M4 0 V3 M12 0 V3" stroke="#777" stroke-width="1.200"></path><text x="8" y="13" font-family="Liberation Sans, sans-serif" font-size="7.500" fill="#333" text-anchor="middle">15</text><rect x="12" y="12" width="4" height="4" fill="#c9c9c9"></rect></g>
</defs>
<use href="#ifold" x="43" y="336.500"></use>
<use href="#iabc" x="67.500" y="357.5"></use>
<use href="#iabc" x="67.500" y="377.5"></use>
<use href="#iabc" x="67.500" y="397.5"></use>
<use href="#iabc" x="67.500" y="417.5"></use>
<use href="#ical" x="69.500" y="435"></use>
<use href="#ifold" x="66.500" y="455.5"></use>
<use href="#icyc" x="67.700" y="474.200"></use>
<use href="#irect" x="67.500" y="496.5"></use>
<use href="#irect" x="67.500" y="516.5"></use>
<use href="#ipers" x="70.500" y="533.5"></use>
<use href="#ipers" x="70.500" y="553.5"></use>
<rect x="74" y="575" width="7" height="1.500" fill="#4caf2e"></rect>
</svg>

<!-- button icons -->
<svg style="left:0;top:290px" width="330" height="40" viewBox="0 290 330 40">
<g transform="translate(29.600,298.700) scale(1.03)"><use href="#icyc"></use></g>
<g transform="translate(116.300,299)"><path d="M4.300 4.500 L9.900 10.500 L15.500 4.500 M9.900 10 V17.500" fill="none" stroke="#5fae20" stroke-width="5.200" stroke-linejoin="round"></path><path d="M0.300 6.300 L1.700 0.700 L7.600 1.800 Z M19.500 6.300 L18.100 0.700 L12.200 1.800 Z" fill="#7dcc30" stroke="#5fae20" stroke-width="1.200" stroke-linejoin="round"></path><path d="M4.300 4.500 L9.900 10.500 L15.500 4.500 M9.900 10 V17.500" fill="none" stroke="#7dcc30" stroke-width="3.600" stroke-linejoin="round"></path><path d="M7.700 5.600 L9.900 8.400 L12.100 5.600 Z" fill="#eef8e4" stroke="#eef8e4" stroke-width="1" stroke-linejoin="round"></path></g>
<g fill="#7cc62a" stroke="#55a012" stroke-width="1"><rect x="227.300" y="299.900" width="7.500" height="7.500" rx="1"></rect><rect x="239" y="299.900" width="7.500" height="7.500" rx="1"></rect><rect x="227.300" y="310.300" width="7.500" height="7.500" rx="1"></rect><rect x="239" y="310.300" width="7.500" height="7.500" rx="1"></rect></g><g fill="#d9f2b8"><rect x="229.500" y="302" width="3.200" height="3.200"></rect><rect x="241.200" y="302" width="3.200" height="3.200"></rect><rect x="229.500" y="312.400" width="3.200" height="3.200"></rect><rect x="241.200" y="312.400" width="3.200" height="3.200"></rect></g>
</svg>
<!-- description box -->
<div class="a" style="left:14px;top:590px;width:292px;height:77px;background:#fff;border:1px solid #a9a9a9;box-sizing:border-box;"></div>
<div class="a" style="left:285px;top:591px;width:18px;height:75px;background:#f0f0f0;"></div>
<div class="a" style="left:285px;top:614px;width:18px;height:26px;background:#cdcdcd;"></div>
<svg style="left:288px;top:599px" width="12" height="8"><path d="M2.300 6.300 L6 2.600 L9.700 6.300" fill="none" stroke="#505050" stroke-width="1.800"></path></svg>
<svg style="left:288px;top:650px" width="12" height="8"><path d="M2.300 1.700 L6 5.400 L9.700 1.700" fill="none" stroke="#505050" stroke-width="1.800"></path></svg>
<span class="t tah" style="font-weight: bold; left: 18px; font-size: 14px; line-height: 14px; top: 595.65px; letter-spacing: 0.138px;">Předmět</span>
<span class="t tah" style="left: 18px; font-size: 13.5px; line-height: 13.5px; top: 612.07px; letter-spacing: -0.331px;">Předmět spisu</span>
<span class="t tah" style="font-weight: bold; left: 18px; font-size: 14px; line-height: 14px; top: 628.15px; letter-spacing: 0.801px;">Příklad<span style="font-weight:normal">:</span></span>
<span class="t tah" style="left: 18px; font-size: 13.5px; line-height: 13.5px; top: 644.57px; letter-spacing: -0.047px;">Smlouva o obchodní spolupráci</span>
<!-- red annotations -->
<div class="a red" style="left:106px;top:286.500px;width:115.500px;height:42px;"></div>
<div class="a red" style="left:55px;top:343px;width:103px;height:42px;"></div>
<span class="t" style="color: rgb(250, 0, 0); font-weight: bold; left: 188.3px; font-size: 23.5px; line-height: 23.5px; top: 264.91px;">3</span>
<span class="t" style="color: rgb(250, 0, 0); font-weight: bold; left: 165.5px; font-size: 23.5px; line-height: 23.5px; top: 355.41px;">2</span>
</div>

<!-- DOC -->
<div id="doc">

<!-- strip between left pane and ruler -->
<div class="a" style="left:329px;top:201px;width:1px;height:487px;background:#d0d0d0;"></div>
<!-- L box -->
<div class="a" style="left:331px;top:202px;width:25px;height:24.500px;background:#fff;border:3px solid #d9d9d9;border-top-width:4px;box-sizing:border-box;"></div>
<svg style="left:340px;top:212px" width="10" height="10"><path d="M2.200 1.300 V7 H8.400" fill="none" stroke="#555" stroke-width="2"></path></svg>
<!-- horizontal ruler -->
<div class="a" style="left:393.500px;top:208px;width:393.500px;height:12px;background:#c6c6c6;"></div>
<div class="a" style="left:416px;top:208px;width:349px;height:12px;background:#fff;"></div>
<!-- vertical ruler -->
<div class="a" style="left:336px;top:238px;width:14px;height:450px;background:#fff;"></div>
<div class="a" style="left:336px;top:238px;width:14px;height:26px;background:#c6c6c6;"></div>
<!-- page -->
<div class="a" style="left:395.500px;top:239.500px;width:392px;height:448.500px;background:#fff;"></div>
<!-- indent markers -->
<svg style="left:410px;top:202px" width="16" height="32" viewBox="410 202 16 32"><path d="M412.800 204.800 H423 L417.900 213.600 Z M417.900 213.600 L423 219.500 V223.500 H412.800 V219.500 Z M412.800 223.500 H423 V231.200 H412.800 Z" fill="#fff" stroke="#7a7a7a" stroke-width="1.100"></path></svg>
<svg style="left:756px;top:210px" width="16" height="16" viewBox="756 210 16 16"><path d="M763 213.500 L767.500 218 V222.500 H758.500 V218 Z" fill="#fff" stroke="#7a7a7a" stroke-width="1"></path></svg>

<span class="t rn" style="left:439.2px;top:208px;">2</span>
<span class="t rn" style="left:476.8px;top:208px;">4</span>
<span class="t rn" style="left:514.5px;top:208px;">6</span>
<span class="t rn" style="left:552.1px;top:208px;">8</span>
<span class="t rn" style="left:589.8px;top:208px;">10</span>
<span class="t rn" style="left:627.5px;top:208px;">12</span>
<span class="t rn" style="left:665.1px;top:208px;">14</span>
<span class="t rn" style="left:702.8px;top:208px;">16</span>
<span class="t rn" style="left:740.4px;top:208px;">18</span>
<span class="t rn" style="left:329.2px;top:293.8px;transform:rotate(-90deg);">2</span>
<span class="t rn" style="left:329.2px;top:331.3px;transform:rotate(-90deg);">4</span>
<span class="t rn" style="left:329.2px;top:368.8px;transform:rotate(-90deg);">6</span>
<span class="t rn" style="left:329.2px;top:406.3px;transform:rotate(-90deg);">8</span>
<span class="t rn" style="left:329.2px;top:443.8px;transform:rotate(-90deg);">10</span>
<span class="t rn" style="left:329.2px;top:481.3px;transform:rotate(-90deg);">12</span>
<span class="t rn" style="left:329.2px;top:518.8px;transform:rotate(-90deg);">14</span>
<span class="t rn" style="left:329.2px;top:556.3px;transform:rotate(-90deg);">16</span>
<span class="t rn" style="left:329.2px;top:593.8px;transform:rotate(-90deg);">18</span>
<span class="t rn" style="left:329.2px;top:631.3px;transform:rotate(-90deg);">20</span>
<span class="t rn" style="left:329.2px;top:668.8px;transform:rotate(-90deg);">22</span>
<!-- doc text -->
<div class="a" style="left:418.500px;top:297px;width:139px;height:34.500px;background:#c0c0c0;"></div>
<span class="t" style="color: rgb(34, 34, 34); left: 418.5px; font-size: 17px; line-height: 17px; top: 268.61px; letter-spacing: 0.508px;">Stálý text</span>
<span class="t" style="color: rgb(34, 34, 34); left: 419.5px; font-size: 17px; line-height: 17px; top: 303.11px; letter-spacing: 0.598px;">Podmíněný text</span>
<span class="t" style="color: rgb(34, 34, 34); left: 418.5px; font-size: 17px; line-height: 17px; top: 337.11px; letter-spacing: 0.508px;">Stálý text</span>
<div class="a red" style="left:408.500px;top:292px;width:166.500px;height:47px;"></div>
<span class="t dj" style="color: rgb(250, 0, 0); font-weight: bold; left: 585px; font-size: 21.5px; line-height: 21.5px; top: 300.81px;">1</span>
<!-- scrollbar -->
<div class="a" style="left:846px;top:201px;width:1px;height:487px;background:#d2d2d2;"></div>
<div class="a" style="left:395px;top:239.500px;width:393px;height:449px;border:1px solid #d0d0d0;border-bottom:none;box-sizing:border-box;"></div>
<div class="a" style="left:826px;top:204px;width:19px;height:482px;background:#dcdcdc;"></div>
<div class="a" style="left:826px;top:204px;width:19px;height:372px;background:#fff;border:1px solid #ababab;box-sizing:border-box;"></div>
<div class="a" style="left:826px;top:222px;width:19px;height:1px;background:#ababab;"></div>
<div class="a" style="left:826px;top:667px;width:19px;height:17px;background:#fff;border:1px solid #ababab;box-sizing:border-box;"></div>
<svg style="left:831px;top:210px" width="10" height="6"><path d="M0.500 5.500 H9.500 L5 1 Z" fill="#666"></path></svg>
<svg style="left:831px;top:673px" width="10" height="6"><path d="M0.500 0.500 H9.500 L5 5 Z" fill="#666"></path></svg>
</div>

<!-- RIGHT PANEL -->
<div id="right">

<div class="a" style="left:856px;top:253px;width:294px;height:426px;background:#fff;"></div>
<span class="t" style="color: rgb(70, 114, 180); -webkit-text-stroke: 0px; left: 864.5px; font-size: 27px; line-height: 27px; top: 221.14px; letter-spacing: -0.508px;">Informační panel</span>
<svg style="left:1060px;top:220px" width="90" height="20" viewBox="1060 220 90 20">
<path d="M1071 227.500 H1082.500 L1076.700 232.800 Z" fill="#666"></path>
<path d="M1123.500 225 L1134.500 236 M1134.500 225 L1123.500 236" stroke="#555" stroke-width="2.500"></path>
</svg>
<span class="t tah" style="left: 873px; font-size: 12px; line-height: 12px; top: 269.84px; letter-spacing: 0.847px;">Navigace:</span>
</div>

<!-- STATUS -->
<div id="stat">

<span class="t" style="left: 12.8px; font-size: 14px; line-height: 14px; top: 694.65px; letter-spacing: -0.154px;">Stránka 1 z 1</span>
<span class="t" style="left: 119.5px; font-size: 14px; line-height: 14px; top: 693.15px; letter-spacing: -0.114px;">2 z 6 slov</span>
<span class="t" style="left: 262.5px; font-size: 14px; line-height: 14px; top: 693.15px; letter-spacing: -0.21px;">Čeština</span>
<span class="t" style="left: 1096.5px; font-size: 14px; line-height: 14px; top: 693.65px; letter-spacing: 0.02px;">40 %</span>
<div class="a" style="left:823.500px;top:688.500px;width:47.500px;height:26px;background:#c6c6c6;"></div>
<svg style="left:0;top:688px" width="1164" height="30" viewBox="0 688 1164 30">
<!-- proofing book -->
<path d="M230.500 694.500 C227.500 693 225 693 222.500 694 V706 C225 705 227.500 705 230.500 707 Z" fill="none" stroke="#666" stroke-width="1.200"></path>
<path d="M230.500 694.500 C232 693.500 233 693.200 234.500 693.200 M230.500 707 C233 705.300 235.500 705 239 706" fill="none" stroke="#666" stroke-width="1.200"></path>
<path d="M233 695 L238.800 702.500 M238.800 695 L233 702.500" stroke="#555" stroke-width="1.800"></path>
<!-- macro icon -->
<rect x="336" y="697" width="13" height="11" fill="#fff" stroke="#666" stroke-width="1.300"></rect>
<rect x="335.500" y="694.500" width="14" height="4" fill="#666"></rect>
<path d="M338 702 H348 M338 705 H348 M340.500 699 V708 M344 699 V708 M347 699 V708" stroke="#888" stroke-width="0.900"></path>
<circle cx="337.500" cy="696" r="3.200" fill="#666"></circle>
<!-- read mode -->
<path d="M798.500 695.500 C796 694 793.500 694 791.500 695 V707 C793.500 706 796 706 798.500 707.500 C801 706 803.500 706 805.500 707 V695 C803.500 694 801 694 798.500 695.500 Z M798.500 695.500 V707.500" fill="#fff" stroke="#666" stroke-width="1"></path>
<path d="M793 697.500 H797 M793 700 H797 M793 702.500 H797 M800 697.500 H804 M800 700 H804 M800 702.500 H804" stroke="#888" stroke-width="0.800"></path>
<!-- print layout -->
<rect x="838.500" y="694.500" width="17" height="14" fill="#fff" stroke="#555" stroke-width="1"></rect>
<path d="M841 697.500 H853 M841 700 H853 M841 702.500 H853 M841 705 H853" stroke="#666" stroke-width="1"></path>
<!-- web layout -->
<rect x="887.500" y="694.500" width="12" height="13" fill="#fff" stroke="#666" stroke-width="1"></rect>
<path d="M890 697.500 H897 M890 700 H897 M890 702.500 H894" stroke="#777" stroke-width="0.900"></path>
<circle cx="899.500" cy="704.500" r="4" fill="#fff" stroke="#555" stroke-width="1.100"></circle>
<path d="M896 704.500 H903 M899.500 701 V708" stroke="#555" stroke-width="0.800"></path>
<!-- zoom slider -->
<path d="M925 701.500 H932" stroke="#444" stroke-width="2"></path>
<path d="M937 701.500 H1061" stroke="#a0a0a0" stroke-width="1"></path>
<path d="M1001.500 698.500 V705" stroke="#a0a0a0" stroke-width="1"></path>
<rect x="958" y="694" width="4" height="14" fill="#444"></rect>
<path d="M1067.500 701.500 H1078 M1072.700 696.500 V706.500" stroke="#444" stroke-width="2"></path>
</svg>
</div>

</body></html>
